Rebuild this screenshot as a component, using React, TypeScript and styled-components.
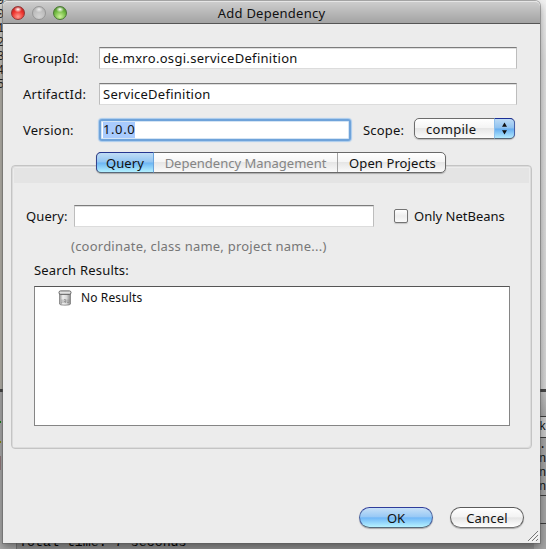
import React from 'react';
import styled, { createGlobalStyle, css } from 'styled-components';

const Global = createGlobalStyle`
  *, *::before, *::after { box-sizing: border-box; }
  body { margin: 0; overflow: hidden; }
`;

/* ---------- desktop behind the dialog ---------- */

const Desktop = styled.div`
  position: relative;
  width: 546px;
  height: 549px;
  overflow: hidden;
  background: #929292;
  font-family: "Noto Sans", "Lucida Grande", sans-serif;
  font-size: 13px;
  color: #111;
`;

const EditorWindow = styled.div`
  position: absolute;
  inset: 0 0 auto 0;
  height: 392px;
  display: flex;
  justify-content: space-between;
  background: linear-gradient(#f0f0f0 0, #dedede 60px, #d4d4d4 100%);
  border-bottom: 3px solid #484848;
  overflow: hidden;
`;

const Gutter = styled.div`
  width: 12px;
  background: linear-gradient(#dadad6, #b5b2aa 90px);
`;

const LineNumbers = styled.div`
  margin: -6px 0 0 -3px;
  font: 12px/14px "Liberation Mono", monospace;
  color: #222;
  white-space: pre;
`;

const OutputWindow = styled.div`
  position: absolute;
  inset: 392px 0 0 0;
  display: flex;
  justify-content: space-between;
  background: linear-gradient(#c0c0c0, #a4a4a4 26px, #a4a4a4);
`;

const StatusMarks = styled.div`
  width: 17px;
  padding-top: 29px;
  display: flex;
  flex-direction: column;
  background: #a9a9a9;
  border-right: 1px solid #777;
`;

const Mark = styled.i<{ $color: string; $height: number; $gap: number }>`
  width: 1px;
  height: ${p => p.$height}px;
  margin-bottom: ${p => p.$gap}px;
  background: ${p => p.$color};
`;

const ConsoleLine = styled.div`
  align-self: flex-end;
  flex: 1;
  height: 13px;
  padding-left: 2px;
  font: 13.3px/14px "Liberation Mono", monospace;
  white-space: pre;
  color: #000;
  background: #929292;
`;

const ConsoleEdge = styled.div`
  width: 12px;
  display: grid;
  grid-template-rows: 25px 21px 14px 14px 14px 16px 28px 1fr;
  font: 12px/14px "Liberation Mono", monospace;
  color: #111;
`;

const EdgeCell = styled.div<{ $line?: boolean; $light?: boolean }>`
  padding: ${p => (p.$light ? '3px' : '0')} 0 0 5px;
  overflow: hidden;
  border-bottom: ${p => (p.$line ? '1px solid #3c3c3c' : '0')};
  background: ${p => (p.$light ? '#c8c8c8' : 'transparent')};
  white-space: pre;
`;

/* ---------- dialog ---------- */

const Dialog = styled.main`
  position: absolute;
  left: 3px;
  top: 1px;
  width: 537px;
  height: 542px;
  background: #ececec;
  border-radius: 5px 5px 0 0;
  box-shadow: 0 0 0 1px rgba(90, 90, 90, 0.45), 0 4px 9px rgba(0, 0, 0, 0.4);
`;

const TitleBar = styled.header`
  height: 23px;
  display: grid;
  grid-template-columns: 70px 1fr 70px;
  align-items: center;
  background: linear-gradient(#cdcdcd, #a3a3a3);
  border-top: 1px solid #e6e6e6;
  border-bottom: 1px solid #555;
  border-radius: 5px 5px 0 0;
`;

const Lights = styled.div`
  display: flex;
  gap: 7px;
  padding-left: 8px;
`;

const Light = styled.span<{ $tone: 'red' | 'grey' | 'green' }>`
  width: 14px;
  height: 14px;
  border-radius: 50%;
  ${p => p.$tone === 'red' && css`
    background: radial-gradient(ellipse 4px 3px at 50% 20%, #fff 0, rgba(255,255,255,0) 100%),
      radial-gradient(circle at 50% 80%, #ff9b8f 0, #ee352f 50%, #a91515 100%);
    border: 1px solid #943535;`}
  ${p => p.$tone === 'grey' && css`
    background: radial-gradient(ellipse 4px 3px at 50% 20%, #eee 0, rgba(255,255,255,0) 100%),
      radial-gradient(circle at 50% 80%, #d2d2d2 0, #bcbcbc 60%, #a9a9a9 100%);
    border: 1px solid #969696;`}
  ${p => p.$tone === 'green' && css`
    background: radial-gradient(ellipse 4px 3px at 50% 20%, #fff 0, rgba(255,255,255,0) 100%),
      radial-gradient(circle at 50% 80%, #cdf29a 0, #76bd45 50%, #3c7e1e 100%);
    border: 1px solid #4a7834;`}
`;

const Text = styled.span<{ $track?: number; $tone?: string; $size?: number }>`
  white-space: nowrap;
  line-height: 18px;
  letter-spacing: ${p => p.$track ?? 0}px;
  color: ${p => p.$tone ?? '#111'};
  font-size: ${p => p.$size ?? 13}px;
`;

const Title = styled(Text)`
  text-align: center;
`;

const Coordinates = styled.section`
  padding: 23px 23px 0 20px;
  display: grid;
  grid-template-rows: 22px 22px 25px;
  row-gap: 14px;
`;

const FormRow = styled.label`
  display: grid;
  grid-template-columns: 76px 1fr;
  align-items: center;
`;

const Field = styled.div<{ $width?: number }>`
  height: 22px;
  width: ${p => (p.$width ? `${p.$width}px` : '100%')};
  padding-left: 3px;
  display: flex;
  align-items: center;
  background: #fff;
  border: 1px solid;
  border-color: #7c7c7c #bdbdbd #dcdcdc #bdbdbd;
  box-shadow: inset 0 1px 0 #dedede;
`;

const VersionRow = styled.div`
  display: grid;
  grid-template-columns: 74px 255px 11px auto 1fr;
  align-items: center;
  margin: -4px 0 0;
`;

const FocusedField = styled.div`
  width: 252px;
  height: 22px;
  margin-left: 2px;
  padding-left: 2px;
  display: flex;
  align-items: center;
  background: #fff;
  border: 2px solid #6fa3da;
  border-radius: 3px;
  box-shadow: inset 0 0 0 1px #d4e4f4, 0 0 1px 1px #a9cbee;
`;

const Selection = styled(Text)`
  background: #a9cbfd;
  line-height: 15px;
  height: 16px;
`;

const Popup = styled.div`
  justify-self: end;
  width: 101px;
  height: 21px;
  margin: -2px 2px 0 0;
  display: flex;
  align-items: center;
  padding-left: 11px;
  background: linear-gradient(#fff 0, #f4f4f4 48%, #e6e6e6 50%, #fbfbfb 100%);
  border: 1px solid #6c6c6c;
  border-radius: 5px;
  box-shadow: 0 1px 1px #bbb;
`;

const PopupArrows = styled.span`
  margin: -1px -1px -1px auto;
  width: 21px;
  height: 21px;
  display: grid;
  place-items: center;
  background: linear-gradient(#bddbf5 0, #8fc2f0 48%, #66adf0 52%, #b3eafe 100%);
  border: 1px solid;
  border-color: #1c2f96 #4560a8 #566577 #8fc0ec;
  border-radius: 0 5px 5px 0;
`;

const TabArea = styled.section`
  margin: 8px 8px 0 8px;
  display: flex;
  flex-direction: column;
`;

const TabStrip = styled.nav`
  align-self: center;
  position: relative;
  z-index: 1;
  width: 350px;
  height: 21px;
  margin-right: 1px;
  display: grid;
  grid-template-columns: 57px 184px 1fr;
  background: linear-gradient(#fff 0, #f5f5f5 48%, #e6e6e6 50%, #fafafa 100%);
  border: 1px solid #696969;
  border-radius: 5px;
  box-shadow: 0 1px 1px #aaa;
`;

const Tab = styled.div<{ $active?: boolean }>`
  display: flex;
  align-items: center;
  justify-content: center;
  border-right: 1px solid #a4a4a4;
  &:last-child { border-right: 0; padding-left: 2px; }
  ${p => p.$active && css`
    margin: -1px 0 -1px -1px;
    background: linear-gradient(#c1ddf5 0, #92c5f2 48%, #6cb5f3 52%, #b3f0ff 100%);
    border: 1px solid;
    border-color: #26368f #6aa4dc #58687a #34448f;
    border-radius: 5px 0 0 5px;
  `}
`;

const Panel = styled.div`
  margin-top: -8px;
  height: 284px;
  border: 1px solid #c4c4c4;
  border-radius: 4px;
  box-shadow: inset 1px 1px 0 #dbdbdb, inset -1px -1px 0 #dcdcdc;
  padding: 2px 2px 0;
  display: flex;
  flex-direction: column;
  &::before {
    content: "";
    flex: 0 0 15px;
    background: #e4e4e4;
  }
`;

const QueryRow = styled.div`
  display: flex;
  align-items: center;
  padding: 22px 0 0 12px;
`;

const QueryLabel = styled(Text)`
  width: 48px;
`;

const Checkbox = styled.span`
  width: 14px;
  height: 14px;
  margin: 0 6px 0 20px;
  border: 1px solid #747474;
  border-radius: 2px;
  background: linear-gradient(#fff, #ededed 50%, #fafafa);
  box-shadow: 0 1px 1px #c5c5c5;
`;

const Hint = styled(Text)`
  margin: 10px 0 0 57px;
`;

const ResultsLabel = styled(Text)`
  margin: 6px 0 0 20px;
`;

const Results = styled.div`
  width: 476px;
  height: 140px;
  margin: 7px 0 0 20px;
  padding: 1px 0 0 23px;
  background: #fff;
  border: 1px solid #858585;
  border-top-color: #555;
`;

const ResultRow = styled.div`
  display: flex;
  align-items: center;
  height: 19px;
  gap: 9px;
`;

const Actions = styled.footer`
  margin-top: 58px;
  padding-right: 16px;
  display: flex;
  justify-content: flex-end;
  gap: 17px;
`;

const PushButton = styled.div<{ $primary?: boolean }>`
  width: 74px;
  height: 21px;
  display: flex;
  align-items: center;
  justify-content: center;
  border-radius: 11px;
  border: 1px solid;
  border-color: #5a5a5a #606060 #727272;
  background: linear-gradient(#fff 0, #f3f3f3 46%, #e5e5e5 52%, #fff 100%);
  box-shadow: 0 1px 1px #aaa;
  ${p => p.$primary && css`
    border-color: #303d9b #48619e #566a7c;
    background: linear-gradient(#c7e0f7 0, #98c9f5 46%, #71b7f7 52%, #b6f3ff 100%);
  `}
`;

const Grip = styled.svg`
  position: absolute;
  right: 1px;
  bottom: 1px;
`;

const ArrowsIcon = () => (
  <svg width="7" height="13" viewBox="0 0 7 13" fill="#111">
    <path d="M3.5 0.5 6 4.7H1zM3.5 12.5 6 8.3H1z" />
  </svg>
);

const JarIcon = () => (
  <svg width="14" height="16" viewBox="0 0 14 16">
    <defs>
      <linearGradient id="jar">
        <stop offset="0" stopColor="#999" />
        <stop offset=".3" stopColor="#eee" />
        <stop offset=".65" stopColor="#d8d8d8" />
        <stop offset="1" stopColor="#888" />
      </linearGradient>
    </defs>
    <path d="M1.500 4V14q0 1.200 5.500 1.200T12.500 14V4z" fill="url(#jar)" stroke="#777" strokeWidth=".7" />
    <rect x="1" y=".9" width="12" height="3.400" rx="1.600" fill="#e2e2e2" stroke="#555" strokeWidth=".9" />
    <path d="M4 9.500v3.500H3M6 13V9.500h1.500V13M6 11.500h1.500M9 9.500v3h2v-3" fill="none" stroke="#888" strokeWidth=".7" />
  </svg>
);

export default function App() {
  return (
    <Desktop>
      <Global />
      <EditorWindow>
        <Gutter>
          <LineNumbers>{'9\n0\n1\n2\n3\n4\n5'}</LineNumbers>
        </Gutter>
      </EditorWindow>
      <OutputWindow>
        <StatusMarks>
          <Mark $color="#168016" $height={2} $gap={18} />
          <Mark $color="#8a8a10" $height={2} $gap={13} />
          <Mark $color="#92797b" $height={14} $gap={0} />
        </StatusMarks>
        <ConsoleLine>Total time: 7 seconds</ConsoleLine>
        <ConsoleEdge>
          <EdgeCell $line />
          <EdgeCell $light $line>k</EdgeCell>
          <EdgeCell>..</EdgeCell>
          <EdgeCell>n</EdgeCell>
          <EdgeCell>n</EdgeCell>
          <EdgeCell $line>n</EdgeCell>
          <EdgeCell $line />
          <EdgeCell />
        </ConsoleEdge>
      </OutputWindow>

      <Dialog>
        <TitleBar>
          <Lights>
            <Light $tone="red" />
            <Light $tone="grey" />
            <Light $tone="green" />
          </Lights>
          <Title $track={0.25}>Add Dependency</Title>
        </TitleBar>

        <Coordinates>
          <FormRow>
            <Text $track={0.15}>GroupId:</Text>
            <Field><Text $track={0.3}>de.mxro.osgi.serviceDefinition</Text></Field>
          </FormRow>
          <FormRow>
            <Text $track={0.27}>ArtifactId:</Text>
            <Field><Text $track={0.25}>ServiceDefinition</Text></Field>
          </FormRow>
          <VersionRow>
            <Text $track={0.2}>Version:</Text>
            <FocusedField><Selection $track={0.6}>1.0.0</Selection></FocusedField>
            <span />
            <Text $track={0.2}>Scope:</Text>
            <Popup>
              <Text $track={0.3}>compile</Text>
              <PopupArrows><ArrowsIcon /></PopupArrows>
            </Popup>
          </VersionRow>
        </Coordinates>

        <TabArea>
          <TabStrip>
            <Tab $active><Text $track={0.1}>Query</Text></Tab>
            <Tab><Text $tone="#858585">Dependency Management</Text></Tab>
            <Tab><Text $track={0.1}>Open Projects</Text></Tab>
          </TabStrip>
          <Panel>
            <QueryRow>
              <QueryLabel $track={0.1}>Query:</QueryLabel>
              <Field $width={300} />
              <Checkbox />
              <Text>Only NetBeans</Text>
            </QueryRow>
            <Hint $track={0.23} $tone="#777">(coordinate, class name, project name...)</Hint>
            <ResultsLabel $track={0.2}>Search Results:</ResultsLabel>
            <Results>
              <ResultRow>
                <JarIcon />
                <Text $size={12} $track={0.12}>No Results</Text>
              </ResultRow>
            </Results>
          </Panel>
        </TabArea>

        <Actions>
          <PushButton $primary><Text>OK</Text></PushButton>
          <PushButton><Text $track={0.2}>Cancel</Text></PushButton>
        </Actions>
        <Grip width="12" height="12" viewBox="0 0 12 12" stroke="#777" strokeWidth="1">
          <path d="M1 11 11 1M5 11l6-6M9 11l2-2" />
          <path d="M2 12 12 2M6 12l6-6" stroke="#fff" strokeWidth=".6" />
        </Grip>
      </Dialog>
    </Desktop>
  );
}
